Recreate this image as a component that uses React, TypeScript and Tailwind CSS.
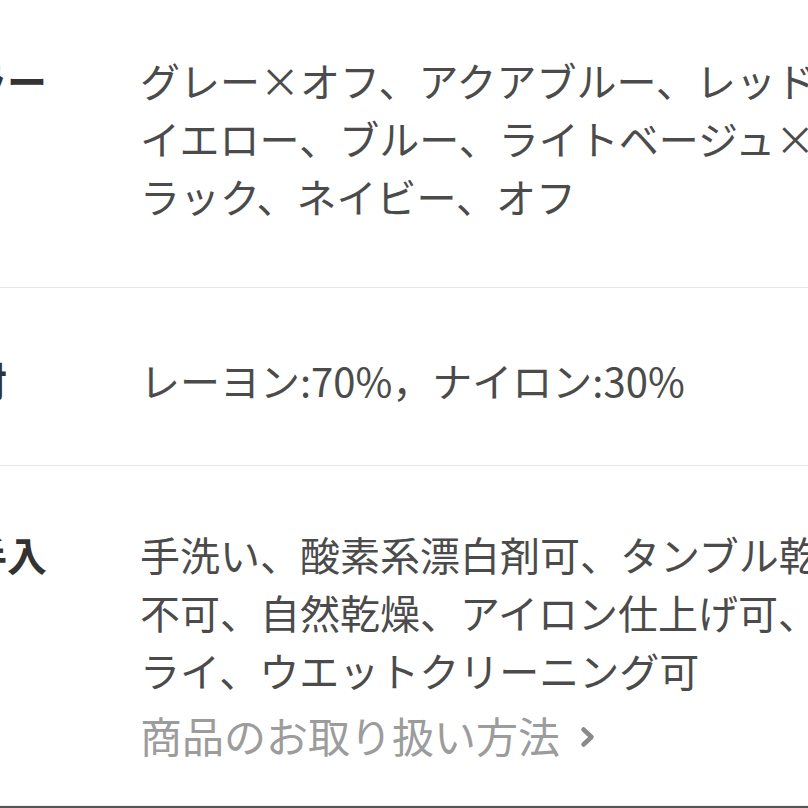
import React from "react";

const font = { fontFamily: '"Noto Sans CJK JP", "Noto Sans", sans-serif' };

function Row({
  label,
  children,
  className,
}: {
  label: string;
  children: React.ReactNode;
  className: string;
}) {
  return (
    <div className={`flex border-b border-[#e6e6e6] ${className}`}>
      <div className="w-[213px] shrink-0 text-[40px] leading-[58px] font-bold text-[#333333] whitespace-nowrap">
        {label}
      </div>
      <div className="flex flex-col text-[40px] leading-[58px] text-[#4b4b4b] whitespace-nowrap">
        {children}
      </div>
    </div>
  );
}

export default function App() {
  return (
    <div className="w-[808px] h-[808px] overflow-hidden bg-white" style={font}>
      <div className="-ml-[73px] w-[1000px]">
        <Row label="カラー" className="pt-[51px] pb-[62px]">
          <span>グレー×オフ、アクアブルー、レッド×オフ、</span>
          <span>イエロー、ブルー、ライトベージュ×ブ</span>
          <span>ラック、ネイビー、オフ</span>
        </Row>
        <Row label="素材" className="pt-[63px] pb-[56px]">
          <span>レーヨン:70%，ナイロン:30%</span>
        </Row>
        <div className="flex pt-[59px] pb-[40px] border-b border-[#efefef]">
          <div className="w-[213px] shrink-0 text-[40px] leading-[58px] font-bold text-[#333333] whitespace-nowrap">
            お手入
          </div>
          <div className="flex flex-col text-[40px] leading-[58px] text-[#4b4b4b] whitespace-nowrap">
            <span>手洗い、酸素系漂白剤可、タンブル乾燥</span>
            <span>不可、自然乾燥、アイロン仕上げ可、ド</span>
            <span>ライ、ウエットクリーニング可</span>
            <span className="mt-[6px] flex items-center text-[42px] leading-[60px] text-[#9c9c9c]">
              商品のお取り扱い方法
              <svg
                width="16"
                height="22"
                viewBox="0 0 16 22"
                className="ml-[20px] mt-[4px]"
              >
                <path
                  d="M3.5 3.5 L11.5 11 L3.5 18.5"
                  fill="none"
                  stroke="#8a8a8a"
                  strokeWidth="4.5"
                  strokeLinecap="round"
                  strokeLinejoin="round"
                />
              </svg>
            </span>
          </div>
        </div>
        <div className="h-[3px] bg-[#555555]" />
      </div>
    </div>
  );
}
